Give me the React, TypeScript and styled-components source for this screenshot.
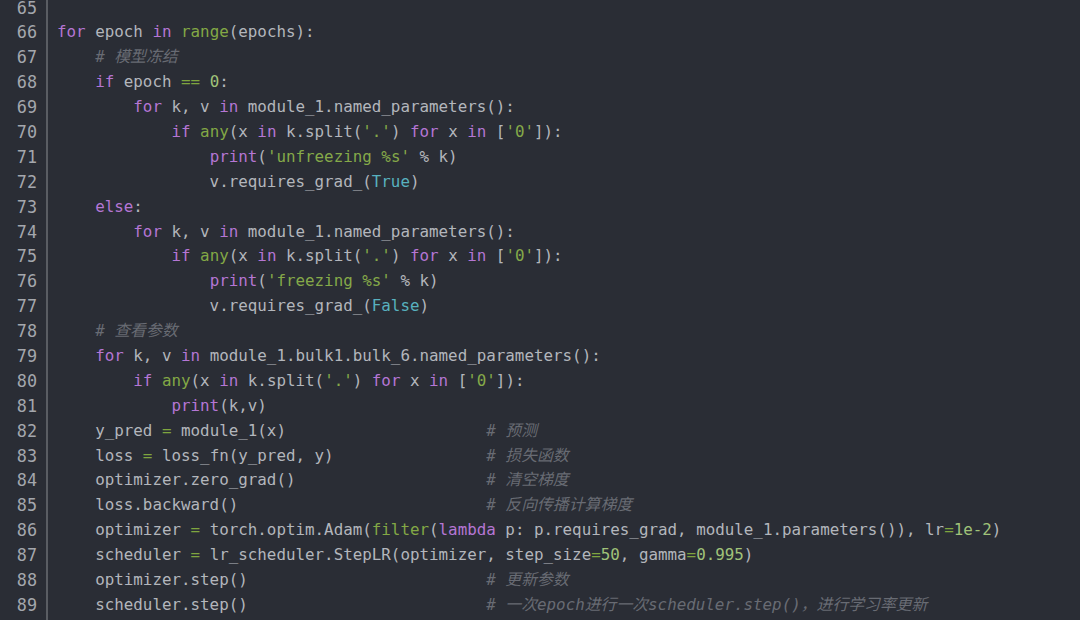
import React from "react";
import styled, { createGlobalStyle } from "styled-components";

const GlobalStyle = createGlobalStyle`
  html, body {
    margin: 0;
    padding: 0;
    background: #2a2d35;
    overflow: hidden;
  }
`;

const LINE_H = "24.9px";

const Editor = styled.div`
  display: flex;
  width: 1080px;
  height: 620px;
  overflow: hidden;
  background: #2a2d35;
`;

const Gutter = styled.div`
  width: 37px;
  padding-right: 9px;
  border-right: 2px solid #5a5d63;
  flex-shrink: 0;
`;

const Scroll = styled.div`
  margin-top: -4.5px;
`;

const LineNo = styled.div`
  height: ${LINE_H};
  line-height: ${LINE_H};
  text-align: right;
  font-family: "DejaVu Sans Mono", monospace;
  font-size: 16.8px;
  color: #a4a7ad;
`;

const Code = styled.div`
  flex: 1;
  padding-left: 9px;
`;

const CodeLine = styled.div`
  height: ${LINE_H};
  line-height: ${LINE_H};
  white-space: pre;
  font-family: "DejaVu Sans Mono", "Noto Sans CJK SC", monospace;
  font-size: 15.85px;
  color: #b3b6bc;
`;

type Kind = "kw" | "fn" | "str" | "num" | "op" | "const" | "comment" | "text";

const colors: Record<Kind, string> = {
  kw: "#b576d4",
  fn: "#83a845",
  str: "#85a949",
  num: "#a0c279",
  op: "#7fa53f",
  const: "#58b1bf",
  comment: "#686b73",
  text: "#b3b6bc",
};

const Tok = styled.span<{ $kind: Kind }>`
  color: ${(p) => colors[p.$kind]};
  font-style: ${(p) => (p.$kind === "comment" ? "italic" : "normal")};
`;

const KW = new Set(["for", "in", "if", "else", "lambda", "print"]);
const FN = new Set(["range", "any", "filter"]);
const CONST = new Set(["True", "False"]);

function tokenize(src: string): { k: Kind; t: string }[] {
  const out: { k: Kind; t: string }[] = [];
  const re = /(#.*$)|('[^']*')|(\b\d+(?:\.\d+)?(?:e-\d+)?\b)|(==|=)|([A-Za-z_][A-Za-z0-9_]*)|([\s\S])/g;
  let m: RegExpExecArray | null;
  while ((m = re.exec(src))) {
    if (m[1]) out.push({ k: "comment", t: m[1] });
    else if (m[2]) out.push({ k: "str", t: m[2] });
    else if (m[3]) out.push({ k: "num", t: m[3] });
    else if (m[4]) out.push({ k: "op", t: m[4] });
    else if (m[5]) {
      const w = m[5];
      out.push({ k: KW.has(w) ? "kw" : FN.has(w) ? "fn" : CONST.has(w) ? "const" : "text", t: w });
    } else out.push({ k: "text", t: m[6] });
  }
  const merged: { k: Kind; t: string }[] = [];
  for (const x of out) {
    const last = merged[merged.length - 1];
    if (last && last.k === x.k && x.k === "text") last.t += x.t;
    else merged.push({ ...x });
  }
  return merged;
}

const pad = (s: string, c: string) => s + " ".repeat(Math.max(1, 45 - s.length)) + c;

const lines: string[] = [
  "",
  "for epoch in range(epochs):",
  "    # 模型冻结",
  "    if epoch == 0:",
  "        for k, v in module_1.named_parameters():",
  "            if any(x in k.split('.') for x in ['0']):",
  "                print('unfreezing %s' % k)",
  "                v.requires_grad_(True)",
  "    else:",
  "        for k, v in module_1.named_parameters():",
  "            if any(x in k.split('.') for x in ['0']):",
  "                print('freezing %s' % k)",
  "                v.requires_grad_(False)",
  "    # 查看参数",
  "    for k, v in module_1.bulk1.bulk_6.named_parameters():",
  "        if any(x in k.split('.') for x in ['0']):",
  "            print(k,v)",
  pad("    y_pred = module_1(x)", "# 预测"),
  pad("    loss = loss_fn(y_pred, y)", "# 损失函数"),
  pad("    optimizer.zero_grad()", "# 清空梯度"),
  pad("    loss.backward()", "# 反向传播计算梯度"),
  "    optimizer = torch.optim.Adam(filter(lambda p: p.requires_grad, module_1.parameters()), lr=1e-2)",
  "    scheduler = lr_scheduler.StepLR(optimizer, step_size=50, gamma=0.995)",
  pad("    optimizer.step()", "# 更新参数"),
  pad("    scheduler.step()", "# 一次epoch进行一次scheduler.step()，进行学习率更新"),
];

export default function App() {
  return (
    <>
      <GlobalStyle />
      <Editor>
        <Gutter>
          <Scroll>
            {lines.map((_, i) => (
              <LineNo key={i}>{65 + i}</LineNo>
            ))}
          </Scroll>
        </Gutter>
        <Code>
          <Scroll>
            {lines.map((l, i) => (
              <CodeLine key={i}>
                {tokenize(l).map((t, j) => (
                  <Tok key={j} $kind={t.k}>
                    {t.t}
                  </Tok>
                ))}
              </CodeLine>
            ))}
          </Scroll>
        </Code>
      </Editor>
    </>
  );
}
